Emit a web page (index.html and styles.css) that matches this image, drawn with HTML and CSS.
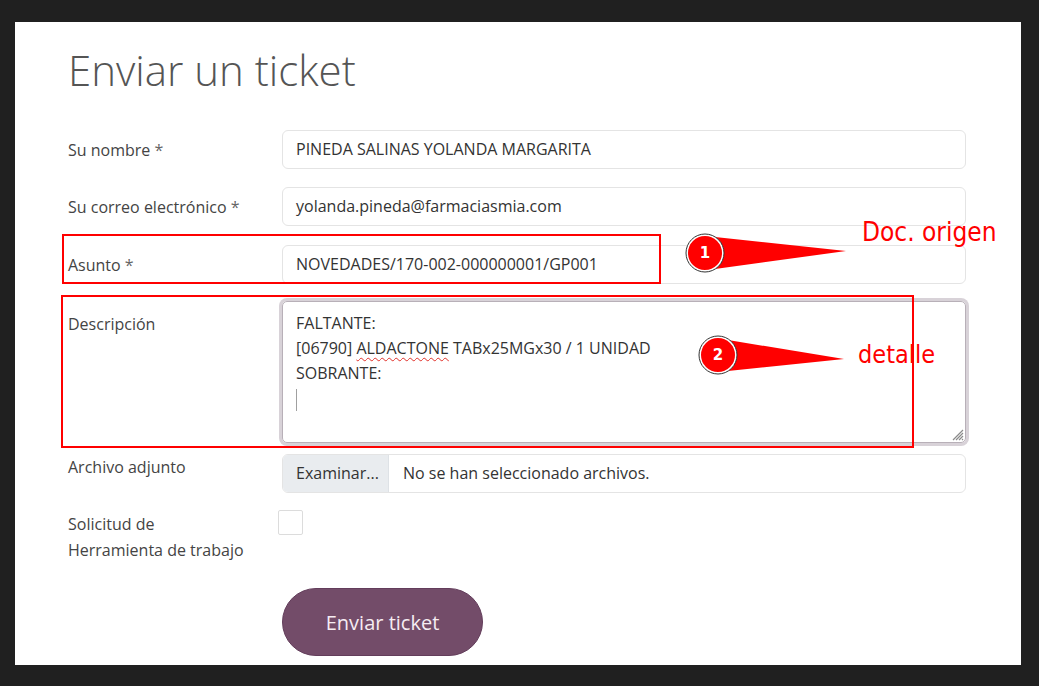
FILE: index.html
```html
<!DOCTYPE html>
<html lang="es">
<head>
<meta charset="utf-8">
<title>Enviar un ticket</title>
<link rel="stylesheet" href="styles.css">
</head>
<body>
<div class="page">
  <div class="container">
    <h1 class="title">Enviar un ticket</h1>
    <div class="form">
      <div class="row row-1">
        <div class="label label-input">Su nombre <span class="req">*</span></div>
        <div class="field"><div class="input">PINEDA SALINAS YOLANDA MARGARITA</div></div>
      </div>
      <div class="row row-2">
        <div class="label label-input">Su correo electrónico <span class="req">*</span></div>
        <div class="field"><div class="input">yolanda.pineda@farmaciasmia.com</div></div>
      </div>
      <div class="row row-3">
        <div class="label label-input">Asunto <span class="req">*</span></div>
        <div class="field"><div class="input">NOVEDADES/170-002-000000001/GP001</div></div>
      </div>
      <div class="row row-4">
        <div class="label label-area">Descripción</div>
        <div class="field">
          <div class="textarea">
            <div class="line">FALTANTE:</div>
            <div class="line">[06790] <span class="spell">ALDACTONE</span> TABx25MGx30 / 1 UNIDAD</div>
            <div class="line">SOBRANTE:</div>
            <div class="line"><span class="caret"></span></div>
            <svg class="grip" width="14" height="14" viewBox="0 0 14 14">
              <path d="M13 3 L3 13 M13 6 L6 13 M13 9 L9 13 M13 12 L12 13" stroke="#8a8a8a" stroke-width="1.2" fill="none"/>
            </svg>
          </div>
        </div>
      </div>
      <div class="row row-5">
        <div class="label label-file">Archivo adjunto</div>
        <div class="field">
          <div class="file">
            <span class="file-btn">Examinar...</span>
            <span class="file-text">No se han seleccionado archivos.</span>
          </div>
        </div>
      </div>
      <div class="row row-6">
        <div class="label label-check">Solicitud de<br>Herramienta de trabajo</div>
        <div class="field"><span class="checkbox"></span></div>
      </div>
      <div class="row row-7">
        <div class="label"></div>
        <div class="field"><button class="submit" type="button">Enviar ticket</button></div>
      </div>
    </div>
  </div>

  <div class="note-box note-box-1"></div>
  <div class="note-box note-box-2"></div>
  <svg class="callouts" width="1006" height="643" viewBox="0 0 1006 643">
    <polygon points="700,215 831,229 700,247" fill="#ff0000"/>
    <circle cx="690" cy="231" r="18" fill="#ff0000" stroke="#ffffff" stroke-width="2"/>
    <circle cx="690" cy="231" r="19" fill="none" stroke="#333333" stroke-width="1"/>
    <text x="690" y="236" class="num">1</text>
    <polygon points="713,318 829,337 713,349" fill="#ff0000"/>
    <circle cx="703" cy="333" r="18" fill="#ff0000" stroke="#ffffff" stroke-width="2"/>
    <circle cx="703" cy="333" r="19" fill="none" stroke="#333333" stroke-width="1"/>
    <text x="703" y="338" class="num">2</text>
  </svg>
  <div class="note-text note-text-1">Doc. origen</div>
  <div class="note-text note-text-2">detalle</div>
</div>
</body>
</html>
```

FILE: styles.css
```css
html, body {
  margin: 0;
  padding: 0;
}
body {
  background: #202020;
  width: 1039px;
  height: 686px;
  overflow: hidden;
  font-family: "Open Sans", "Noto Sans", sans-serif;
}
.page {
  position: relative;
  margin: 22px 18px 0 15px;
  height: 643px;
  background: #ffffff;
  overflow: hidden;
}
.container {
  padding: 23px 0 0 53px;
}
.title {
  margin: 0;
  font-size: 42px;
  line-height: 50px;
  font-weight: 300;
  color: #555555;
}
.form {
  margin-top: 35px;
  display: flex;
  flex-direction: column;
}
.row {
  display: flex;
  align-items: flex-start;
}
.row-2 { margin-top: 18px; }
.row-3 { margin-top: 19px; }
.row-4 { margin-top: 17px; }
.row-5 { margin-top: 11px; }
.row-6 { margin-top: 17px; }
.row-7 { margin-top: 25px; }
.label {
  width: 214px;
  flex: none;
  font-size: 16px;
  line-height: 26px;
  color: #444444;
}
.label-input { padding-top: 7px; }
.label-area { padding-top: 10px; }
.label-file { padding-top: 0; }
.label-check { padding-top: 1px; }
.req { color: #666; }
.field {
  width: 684px;
  flex: none;
}
.input {
  box-sizing: border-box;
  height: 39px;
  border: 1px solid #e4e4e4;
  border-radius: 6px;
  padding: 0 13px;
  font-size: 16px;
  line-height: 37px;
  color: #333333;
}
.textarea {
  position: relative;
  box-sizing: border-box;
  height: 142px;
  border: 1px solid #b8b0b8;
  border-radius: 5px;
  box-shadow: 0 0 0 3px #d8d2d8;
  padding: 9px 13px;
  font-size: 16px;
  line-height: 25px;
  color: #333333;
}
.spell {
  text-decoration: underline wavy #e0302a;
  text-decoration-thickness: 1px;
  text-underline-offset: 3px;
}
.caret {
  display: inline-block;
  width: 1px;
  height: 22px;
  background: #a0a0a0;
  vertical-align: middle;
}
.grip {
  position: absolute;
  right: 1px;
  bottom: 1px;
}
.file {
  box-sizing: border-box;
  height: 39px;
  display: flex;
  border: 1px solid #e4e4e4;
  border-radius: 6px;
  overflow: hidden;
  font-size: 16px;
  line-height: 37px;
  color: #333333;
}
.file-btn {
  width: 106px;
  box-sizing: border-box;
  padding-left: 13px;
  background: #e9ecef;
  border-right: 1px solid #dee2e6;
}
.file-text {
  padding-left: 14px;
}
.checkbox {
  display: block;
  box-sizing: border-box;
  width: 25px;
  height: 25px;
  margin-left: -4px;
  border: 1px solid #dcdcdc;
  border-radius: 2px;
  background: #fff;
}
.submit {
  width: 201px;
  height: 68px;
  border: 1px solid #633d5b;
  border-radius: 34px;
  background: #734c69;
  color: #f6ecf3;
  font-family: "Open Sans", "Noto Sans", sans-serif;
  font-size: 20px;
  padding: 0;
}
.note-box {
  position: absolute;
  box-sizing: border-box;
  border: 2px solid #ff0000;
}
.note-box-1 {
  left: 47px;
  top: 212px;
  width: 599px;
  height: 50px;
}
.note-box-2 {
  left: 46px;
  top: 273px;
  width: 853px;
  height: 153px;
}
.callouts {
  position: absolute;
  left: 0;
  top: 0;
  pointer-events: none;
}
.num {
  font-family: "DejaVu Sans", sans-serif;
  font-weight: bold;
  font-size: 15px;
  fill: #ffffff;
  text-anchor: middle;
}
.note-text {
  position: absolute;
  font-family: "DejaVu Sans Condensed", "DejaVu Sans", sans-serif;
  font-size: 26px;
  line-height: 30px;
  color: #ff0000;
}
.note-text-1 {
  left: 847px;
  top: 195px;
}
.note-text-2 {
  left: 843px;
  top: 318px;
  font-size: 25px;
}
```
